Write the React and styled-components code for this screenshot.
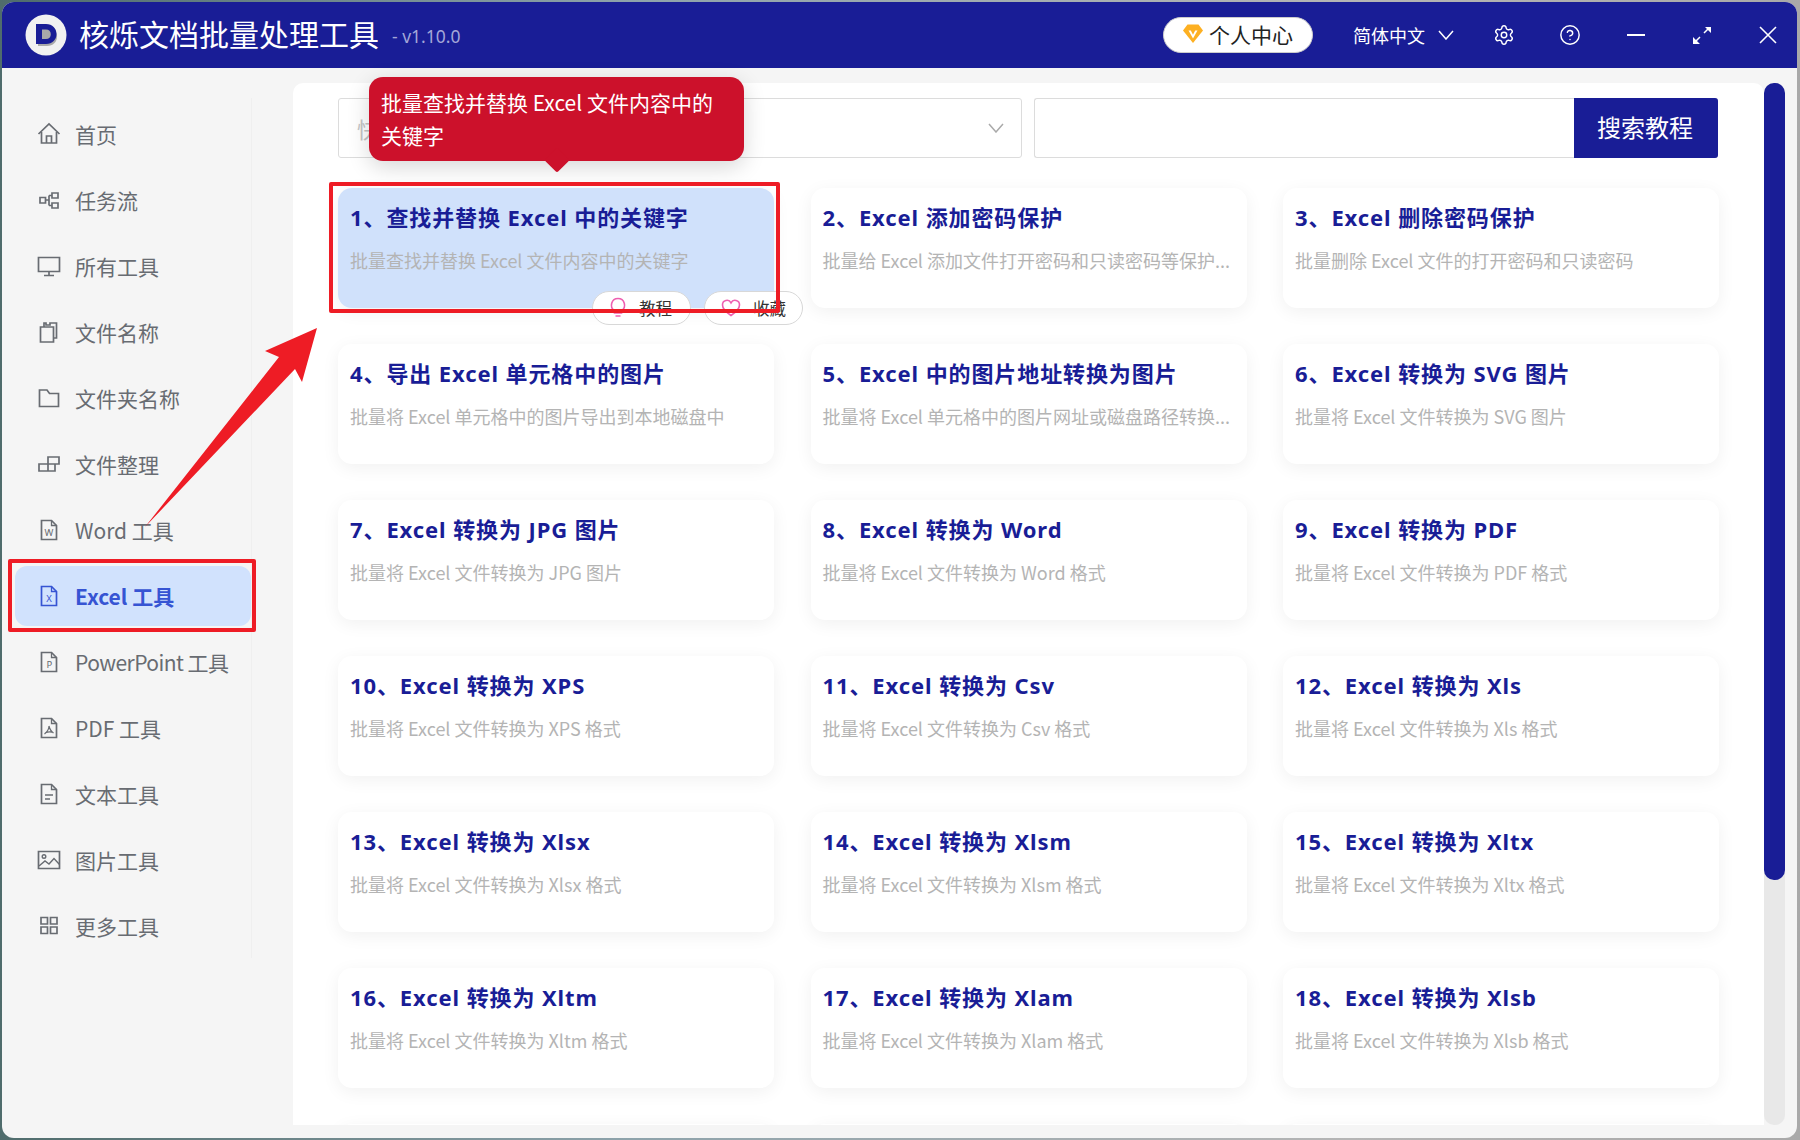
import styled, { createGlobalStyle } from "styled-components";
import { Settings, CircleHelp } from "lucide-react";

const GlobalStyle = createGlobalStyle`
  html, body {
    margin: 0;
    padding: 0;
  }
  body {
    font-family: "Noto Sans", "Noto Sans CJK SC", sans-serif;
  }
  * {
    box-sizing: border-box;
  }
`;

const navy = "#191d96";

const Stage = styled.div`
  position: relative;
  width: 1800px;
  height: 1140px;
  padding: 2px 3px 2px 2px;
  overflow: hidden;
  background: linear-gradient(90deg, #4f6c6c 0, #8ea3ab 35%, #b5b5b5 75%, #a9a9a9 100%);
`;

const Window = styled.div`
  height: 100%;
  display: flex;
  flex-direction: column;
  background: #f5f5f5;
  border-radius: 12px;
  overflow: hidden;
`;

const Header = styled.header`
  height: 66px;
  flex: none;
  display: flex;
  align-items: center;
  padding: 0 18px 0 23px;
  background: ${navy};
`;

const Title = styled.h1`
  margin: 0 0 0 12px;
  font-size: 30px;
  font-weight: 400;
  line-height: 40px;
  color: #fff;
`;

const Version = styled.span`
  margin: 2px 0 0 13px;
  font-size: 17.5px;
  color: #a3a6d8;
`;

const HeaderRight = styled.div`
  margin-left: auto;
  display: flex;
  align-items: center;
  gap: 39px;
`;

const ProfilePill = styled.button`
  width: 150px;
  height: 36px;
  margin-right: 1px;
  display: flex;
  align-items: center;
  gap: 6px;
  padding: 0 0 3px 19px;
  border: 1px solid #ccc;
  border-radius: 18px;
  background: #fff;
  font: 400 21px "Noto Sans CJK SC", sans-serif;
  color: #222;
`;

const Lang = styled.div`
  display: flex;
  align-items: center;
  gap: 13px;
  padding-bottom: 1px;
  font-size: 18px;
  color: #fff;
`;

const WinButtons = styled.div`
  display: flex;
  align-items: center;
  gap: 44px;
  color: #fff;
  svg {
    display: block;
  }
`;

const Body = styled.div`
  flex: 1;
  min-height: 0;
  display: flex;
`;

const Sidebar = styled.aside`
  width: 291px;
  flex: none;
  padding-top: 30px;
`;

const Nav = styled.nav`
  width: 250px;
  height: 860px;
  padding: 6px 0 0 13px;
  border-right: 1px solid #efefef;
`;

const NavItem = styled.div`
  width: 236px;
  height: 60px;
  margin-bottom: 6px;
  display: flex;
  align-items: center;
  gap: 14px;
  padding-left: 22px;
  border-radius: 12px;
  font-family: "Noto Sans CJK SC", sans-serif;
  font-size: 21px;
  letter-spacing: ${(p) => (p.$tight ? "-0.55px" : "0")};
  font-weight: ${(p) => (p.$active ? 700 : 400)};
  color: ${(p) => (p.$active ? "#3654d3" : "#686c72")};
  background: ${(p) => (p.$active ? "#d1e2fd" : "transparent")};
`;

const NavIcon = styled.svg`
  width: 24px;
  height: 24px;
  flex: none;
  fill: none;
  stroke: currentColor;
  stroke-width: 1.7;
`;

const Content = styled.div`
  flex: 1;
  display: flex;
  gap: 0;
  padding: 15px 10px 13px 0;
  min-width: 0;
`;

const Panel = styled.main`
  width: 1471px;
  height: 1042px;
  padding: 15px 44px 0 45px;
  background: #fff;
  border-radius: 10px 10px 0 0;
  overflow: hidden;
`;

const Scrollbar = styled.div`
  width: 21px;
  height: 1042px;
  border-radius: 10px;
  background: #e8e8e8;
`;

const ScrollThumb = styled.div`
  height: 797px;
  border-radius: 10px;
  background: ${navy};
`;

const SearchRow = styled.div`
  display: flex;
  gap: 12px;
`;

const SelectBox = styled.div`
  width: 684px;
  height: 60px;
  display: flex;
  align-items: center;
  justify-content: space-between;
  padding: 0 17px 0 18px;
  border: 1px solid #dcdcdc;
  border-radius: 3px;
  font-size: 22px;
  color: #c4c4c4;
`;

const SearchBox = styled.div`
  width: 684px;
  height: 60px;
  display: flex;
  border: 1px solid #dcdcdc;
  border-right: none;
  border-radius: 3px;
`;

const SearchInput = styled.div`
  flex: 1;
`;

const SearchButton = styled.button`
  width: 144px;
  height: 60px;
  margin: -1px 0;
  padding: 0 2px 3px 0;
  border: none;
  border-radius: 0 3px 3px 0;
  background: ${navy};
  font: 400 24px "Noto Sans CJK SC", sans-serif;
  color: #fff;
`;

const Grid = styled.div`
  margin-top: 30px;
  display: grid;
  grid-template-columns: repeat(3, 436px);
  grid-auto-rows: 120px;
  gap: 36px 36.5px;
`;

const Card = styled.article`
  position: relative;
  padding: 11px 8px 0 12px;
  border-radius: 14px;
  background: ${(p) => (p.$active ? "#d0e1fb" : "#fff")};
  box-shadow: 0 4px 18px rgba(0, 0, 0, 0.06);
`;

const CardTitle = styled.h2`
  margin: 0;
  min-height: 36px;
  font-size: 22px;
  line-height: 36px;
  font-weight: 700;
  letter-spacing: 0.9px;
  white-space: nowrap;
  color: ${navy};
`;

const CardDesc = styled.p`
  margin: 11px 0 0;
  font-family: "Noto Sans CJK SC", sans-serif;
  font-size: 18px;
  line-height: 28px;
  white-space: nowrap;
  color: #b4b4b4;
`;

const PillRow = styled.div`
  position: absolute;
  left: 254px;
  top: 103px;
  display: flex;
  gap: 13px;
`;

const ActionPill = styled.button`
  width: 99px;
  height: 34px;
  display: flex;
  align-items: center;
  gap: 12px;
  padding: 0 0 0 16px;
  border: 1px solid #d8d8d8;
  border-radius: 17px;
  background: #fff;
  font: 400 16.5px "Noto Sans CJK SC", sans-serif;
  color: #333;
  svg {
    flex: none;
  }
`;

const Tooltip = styled.div`
  position: absolute;
  left: 369px;
  top: 77px;
  width: 375px;
  height: 84px;
  padding: 9px 24px 0 12px;
  border-radius: 14px;
  background: #cc112b;
  box-shadow: 0 6px 22px rgba(0, 0, 0, 0.16);
  font-family: "Noto Sans CJK SC", sans-serif;
  font-size: 21px;
  line-height: 33px;
  color: #fff;

  &::after {
    content: "";
    position: absolute;
    left: 179px;
    bottom: -8px;
    width: 18px;
    height: 18px;
    background: #cc112b;
    border-radius: 2px;
    transform: rotate(45deg);
  }
`;

const RedFrame = styled.div`
  position: absolute;
  border: 4px solid #ee1c25;
  border-radius: 2px;
  pointer-events: none;
`;

const CardFrame = styled(RedFrame)`
  left: 329px;
  top: 182px;
  width: 451px;
  height: 131px;
`;

const NavFrame = styled(RedFrame)`
  left: 8px;
  top: 559px;
  width: 248px;
  height: 73px;
`;

const Arrow = styled.svg`
  position: absolute;
  left: 145px;
  top: 328px;
  width: 172px;
  height: 199px;
`;

function Logo() {
  return (
    <svg width="42" height="42" viewBox="0 0 42 42">
      <circle cx="21" cy="21" r="20.5" fill="#f1f1f1" />
      <path d="M13 13h9c6 0 10 4 10 9.5S28 32 22 32h-9z" fill="#a9a9a9" />
      <path fillRule="evenodd" d="M11 10h10c6.5 0 10.500 4.500 10.500 10S27.500 30 21 30H11zM17 15.500v9.500h4c3 0 4.800-2 4.800-4.800s-1.800-4.700-4.800-4.700z" fill={navy} />
    </svg>
  );
}

function Diamond() {
  return (
    <svg width="20" height="19" viewBox="0 0 20 19">
      <path d="M4.500 0.500h11L20 6.500 10 19 0 6.500z" fill="#fdb022" />
      <path d="M5.500 6.500h2.300L10 10.800l2.200-4.300h2.300L10 14.500z" fill="#fff" />
    </svg>
  );
}

function Chevron({ color }) {
  return (
    <svg width="16" height="10" viewBox="0 0 16 10" fill="none" stroke={color} strokeWidth="1.5">
      <path d="M1 1l7 8 7-8" />
    </svg>
  );
}

function DocIcon({ children }) {
  return (
    <NavIcon viewBox="0 0 24 24">
      <path d="M4.500 2.500h10l5 5v14h-15z" />
      <path d="M14.500 2.500v5h5" strokeWidth="1.300" />
      {children}
    </NavIcon>
  );
}

const DocLetter = styled.text`
  font: 400 9.500px "Noto Sans", sans-serif;
  fill: currentColor;
  stroke: none;
  text-anchor: middle;
`;

const navIcons = {
  home: (
    <NavIcon viewBox="0 0 24 24">
      <path d="M1.500 12 12 2l10.500 10" />
      <path d="M4.500 10v11h15V10M9.500 21v-7h5v7" />
    </NavIcon>
  ),
  flow: (
    <NavIcon viewBox="0 0 24 24">
      <path d="M3 9.500h5.500v5.500H3zM15 5h6v5h-6zM15 15h6v5h-6zM8.500 12H12M12 7.500V17.500M12 7.500h3M12 17.500h3" />
    </NavIcon>
  ),
  screen: (
    <NavIcon viewBox="0 0 24 24">
      <path d="M1.500 3.500h21v14h-21zM12 17.500v3.500M7 21.500h10" />
    </NavIcon>
  ),
  files: (
    <NavIcon viewBox="0 0 24 24">
      <path d="M3.500 7h13v15h-13zM7 7V3h2v2h4V3h6.500v15h-3M13 3h3" />
    </NavIcon>
  ),
  folder: (
    <NavIcon viewBox="0 0 24 24">
      <path d="M2.500 4h7.500l2.500 3.500h9v13h-19z" />
    </NavIcon>
  ),
  sort: (
    <NavIcon viewBox="0 0 24 24">
      <path d="M2 12h9v7H2zM11 12h7v7h-7zM11 12V5h11v7h-4M11 12h0" />
    </NavIcon>
  ),
  word: (
    <DocIcon>
      <DocLetter x="12" y="18">W</DocLetter>
    </DocIcon>
  ),
  excel: (
    <DocIcon>
      <DocLetter x="12" y="18">X</DocLetter>
    </DocIcon>
  ),
  ppt: (
    <DocIcon>
      <DocLetter x="12" y="18">P</DocLetter>
    </DocIcon>
  ),
  pdf: (
    <DocIcon>
      <path d="M12 10c1 4 2 5.500 4.500 7M12 10c0 3-2 6-4.500 8M8 17c3-1.500 6-1.500 8.500-.5" strokeWidth="1.200" />
    </DocIcon>
  ),
  text: (
    <DocIcon>
      <path d="M8 13h8M8 17h5" strokeWidth="1.500" />
    </DocIcon>
  ),
  image: (
    <NavIcon viewBox="0 0 24 24">
      <path d="M1.500 3.500h21v17h-21z" />
      <circle cx="7" cy="8.500" r="1.800" strokeWidth="1.400" />
      <path d="M2 18l6-5 4 3 5-5.500 5.500 6" strokeWidth="1.400" />
    </NavIcon>
  ),
  more: (
    <NavIcon viewBox="0 0 24 24">
      <path d="M4 3.500h6.500V10H4zM13.500 3.500H20V10h-6.500zM4 13h6.500v6.500H4zM13.500 13H20v6.500h-6.500z" />
    </NavIcon>
  ),
};

const navItems = [
  { icon: "home", label: "首页" },
  { icon: "flow", label: "任务流" },
  { icon: "screen", label: "所有工具" },
  { icon: "files", label: "文件名称" },
  { icon: "folder", label: "文件夹名称" },
  { icon: "sort", label: "文件整理" },
  { icon: "word", label: "Word 工具" },
  { icon: "excel", label: "Excel 工具", active: true },
  { icon: "ppt", label: "PowerPoint 工具", tight: true },
  { icon: "pdf", label: "PDF 工具" },
  { icon: "text", label: "文本工具" },
  { icon: "image", label: "图片工具" },
  { icon: "more", label: "更多工具" },
];

const cards = [
  ["1、查找并替换 Excel 中的关键字", "批量查找并替换 Excel 文件内容中的关键字"],
  ["2、Excel 添加密码保护", "批量给 Excel 添加文件打开密码和只读密码等保护..."],
  ["3、Excel 删除密码保护", "批量删除 Excel 文件的打开密码和只读密码"],
  ["4、导出 Excel 单元格中的图片", "批量将 Excel 单元格中的图片导出到本地磁盘中"],
  ["5、Excel 中的图片地址转换为图片", "批量将 Excel 单元格中的图片网址或磁盘路径转换..."],
  ["6、Excel 转换为 SVG 图片", "批量将 Excel 文件转换为 SVG 图片"],
  ["7、Excel 转换为 JPG 图片", "批量将 Excel 文件转换为 JPG 图片"],
  ["8、Excel 转换为 Word", "批量将 Excel 文件转换为 Word 格式"],
  ["9、Excel 转换为 PDF", "批量将 Excel 文件转换为 PDF 格式"],
  ["10、Excel 转换为 XPS", "批量将 Excel 文件转换为 XPS 格式"],
  ["11、Excel 转换为 Csv", "批量将 Excel 文件转换为 Csv 格式"],
  ["12、Excel 转换为 Xls", "批量将 Excel 文件转换为 Xls 格式"],
  ["13、Excel 转换为 Xlsx", "批量将 Excel 文件转换为 Xlsx 格式"],
  ["14、Excel 转换为 Xlsm", "批量将 Excel 文件转换为 Xlsm 格式"],
  ["15、Excel 转换为 Xltx", "批量将 Excel 文件转换为 Xltx 格式"],
  ["16、Excel 转换为 Xltm", "批量将 Excel 文件转换为 Xltm 格式"],
  ["17、Excel 转换为 Xlam", "批量将 Excel 文件转换为 Xlam 格式"],
  ["18、Excel 转换为 Xlsb", "批量将 Excel 文件转换为 Xlsb 格式"],
  ["", ""],
  ["", ""],
  ["", ""],
];

export default function App() {
  return (
    <>
      <GlobalStyle />
      <Stage>
        <Window>
          <Header>
            <Logo />
            <Title>核烁文档批量处理工具</Title>
            <Version>- v1.10.0</Version>
            <HeaderRight>
              <ProfilePill>
                <Diamond />
                个人中心
              </ProfilePill>
              <Lang>
                简体中文
                <Chevron color="#fff" />
              </Lang>
              <WinButtons>
                <Settings size={22} strokeWidth={1.6} />
                <CircleHelp size={22} strokeWidth={1.6} />
                <svg width="22" height="22" viewBox="0 0 22 22" stroke="#fff" strokeWidth="1.800">
                  <path d="M2 11h18" />
                </svg>
                <svg width="22" height="22" viewBox="0 0 22 22" fill="#fff" stroke="#fff" strokeWidth="1.500">
                  <path d="M13 9l5-5M3 19l6-6" />
                  <path d="M14 3h6v6zM2 13v7h7z" stroke="none" />
                </svg>
                <svg width="22" height="22" viewBox="0 0 22 22" stroke="#fff" strokeWidth="1.600">
                  <path d="M3 3l16 16M19 3L3 19" />
                </svg>
              </WinButtons>
            </HeaderRight>
          </Header>
          <Body>
            <Sidebar>
              <Nav>
                {navItems.map((item) => (
                  <NavItem key={item.label} $active={item.active} $tight={item.tight}>
                    {navIcons[item.icon]}
                    {item.label}
                  </NavItem>
                ))}
              </Nav>
            </Sidebar>
            <Content>
              <Panel>
                <SearchRow>
                  <SelectBox>
                    快速搜索
                    <Chevron color="#aaa" />
                  </SelectBox>
                  <SearchBox>
                    <SearchInput />
                    <SearchButton>搜索教程</SearchButton>
                  </SearchBox>
                </SearchRow>
                <Grid>
                  {cards.map(([title, desc], i) => (
                    <Card key={i} $active={i === 0}>
                      <CardTitle>{title}</CardTitle>
                      <CardDesc>{desc}</CardDesc>
                      {i === 0 && (
                        <PillRow>
                          <ActionPill>
                            <svg width="18" height="22" viewBox="0 0 18 22" fill="none" stroke="#ee5fb0" strokeWidth="1.600">
                              <path d="M9 1.500a6.500 6.500 0 0 0-3.500 12V16h7v-2.500A6.500 6.500 0 0 0 9 1.500zM6.500 19h5" />
                            </svg>
                            教程
                          </ActionPill>
                          <ActionPill>
                            <svg width="20" height="20" viewBox="0 0 20 20" fill="none" stroke="#ee5fb0" strokeWidth="1.600">
                              <path d="M10 17.500C4 13.500 1.500 10.500 1.500 7A4.500 4.500 0 0 1 10 4.800 4.500 4.500 0 0 1 18.500 7c0 3.500-2.500 6.500-8.500 10.500z" />
                            </svg>
                            收藏
                          </ActionPill>
                        </PillRow>
                      )}
                    </Card>
                  ))}
                </Grid>
              </Panel>
              <Scrollbar>
                <ScrollThumb />
              </Scrollbar>
            </Content>
          </Body>
        </Window>
        <Tooltip>批量查找并替换 Excel 文件内容中的关键字</Tooltip>
        <CardFrame />
        <NavFrame />
        <Arrow viewBox="0 0 172 199">
          <polygon points="172,0 120,23 134,29 0,199 150,41 157,54" fill="#ee1c25" />
        </Arrow>
      </Stage>
    </>
  );
}
